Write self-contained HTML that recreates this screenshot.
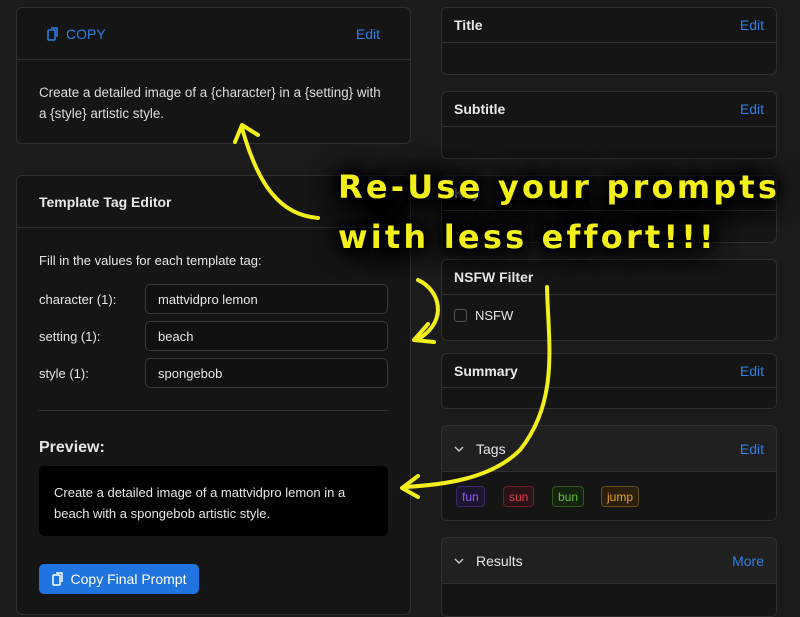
<!DOCTYPE html>
<html><head><style>
*{box-sizing:border-box;margin:0;padding:0}
body{width:800px;height:600px;overflow:hidden;background:#1b1b1b;font-family:"Liberation Sans",sans-serif;color:#e6e6e6;position:relative}
.card{position:absolute;background:#151515;border:1px solid #2f2f2f;border-radius:6px;overflow:hidden}
.hd{border-bottom:1px solid #2f2f2f;display:flex;align-items:center;justify-content:space-between;padding:0 12px;font-weight:bold;font-size:14px;color:#e8e8e8}
.blue{color:#2f7fe6;font-weight:normal;font-size:14px}
.inp{position:absolute;left:145px;width:243px;height:30px;border:1px solid #3a3a3a;border-radius:5px;background:#111;padding:7px 12px;font-size:13px}
.lbl{position:absolute;left:39px;font-size:13px}
.tag{position:absolute;top:486px;height:21px;border-radius:4px;font-size:12px;padding:3px 5px}
.ann{position:absolute;font-family:"DejaVu Sans",sans-serif;font-weight:bold;color:#f2ef1a;font-size:32px;letter-spacing:3.2px;text-shadow:0 0 8px #000,0 0 14px #000,0 0 20px #000,0 0 26px #000,0 0 30px #000}
</style></head><body>
<div class="card" style="left:16px;top:7px;width:395px;height:137px">
 <div class="hd" style="height:52px;padding:0 30px"><span class="blue" style="display:flex;align-items:center;gap:7px"><svg width="12" height="14" viewBox="0 0 12 14"><rect x="1" y="3" width="7" height="10" rx="1" fill="none" stroke="#2f7fe6" stroke-width="1.5"/><path d="M4 1h6v9" fill="none" stroke="#2f7fe6" stroke-width="1.5"/></svg>COPY</span><span class="blue">Edit</span></div>
 <div style="padding:22px 22px;font-size:13.4px;line-height:21px;color:#ddd">Create a detailed image of a {character} in a {setting} with a {style} artistic style.</div>
</div>
<div class="card" style="left:16px;top:175px;width:395px;height:440px">
 <div class="hd" style="height:52px;padding:0 22px">Template Tag Editor</div>
</div>
<div class="lbl" style="top:253px">Fill in the values for each template tag:</div>
<div class="lbl" style="top:292px">character (1):</div><div class="inp" style="top:284px">mattvidpro lemon</div>
<div class="lbl" style="top:329px">setting (1):</div><div class="inp" style="top:321px">beach</div>
<div class="lbl" style="top:366px">style (1):</div><div class="inp" style="top:358px">spongebob</div>
<div style="position:absolute;left:39px;top:410px;width:349px;border-top:1px solid #333"></div>
<div style="position:absolute;left:39px;top:439px;font-weight:bold;font-size:16px">Preview:</div>
<div style="position:absolute;left:39px;top:466px;width:349px;height:70px;background:#000;border-radius:5px;padding:16px 15px;font-size:13px;line-height:21px">Create a detailed image of a mattvidpro lemon in a beach with a spongebob artistic style.</div>
<div style="position:absolute;left:39px;top:564px;width:160px;height:30px;background:#1f74e0;border-radius:5px;font-size:14px;color:#fff;display:flex;align-items:center;justify-content:center;gap:7px"><svg width="12" height="14" viewBox="0 0 12 14"><rect x="1" y="3" width="7" height="10" rx="1" fill="none" stroke="#fff" stroke-width="1.5"/><path d="M4 1h6v9" fill="none" stroke="#fff" stroke-width="1.5"/></svg>Copy Final Prompt</div>

<div class="card" style="left:441px;top:7px;width:336px;height:68px"><div class="hd" style="height:35px">Title<span class="blue">Edit</span></div></div>
<div class="card" style="left:441px;top:91px;width:336px;height:68px"><div class="hd" style="height:35px">Subtitle<span class="blue">Edit</span></div></div>
<div class="card" style="left:441px;top:175px;width:336px;height:68px"><div class="hd" style="height:35px">Key</div></div>
<div class="card" style="left:441px;top:259px;width:336px;height:82px"><div class="hd" style="height:35px">NSFW Filter</div>
 <div style="padding:13px 12px;font-size:13px;display:flex;align-items:center;gap:8px"><span style="width:13px;height:13px;border:1px solid #555;border-radius:3px"></span>NSFW</div></div>
<div class="card" style="left:441px;top:353px;width:336px;height:56px"><div class="hd" style="height:34px">Summary<span class="blue">Edit</span></div></div>
<div class="card" style="left:441px;top:425px;width:336px;height:96px"><div class="hd" style="height:46px;background:#202020;font-weight:normal"><span style="display:flex;align-items:center;gap:12px"><svg width="10" height="6" viewBox="0 0 10 6"><path d="M1 1l4 4 4-4" fill="none" stroke="#ccc" stroke-width="1.4"/></svg>Tags</span><span class="blue">Edit</span></div></div>
<div class="tag" style="left:456px;border:1px solid #3b2a6b;background:#1d1530;color:#8b5cf6">fun</div>
<div class="tag" style="left:503px;border:1px solid #6a2029;background:#2a1216;color:#e0404f">sun</div>
<div class="tag" style="left:552px;border:1px solid #2c5a1c;background:#13230d;color:#62c23a">bun</div>
<div class="tag" style="left:601px;border:1px solid #6a4c17;background:#2a1f0c;color:#e4a52c">jump</div>
<div class="card" style="left:441px;top:537px;width:336px;height:80px"><div class="hd" style="height:46px;background:#202020;font-weight:normal"><span style="display:flex;align-items:center;gap:12px"><svg width="10" height="6" viewBox="0 0 10 6"><path d="M1 1l4 4 4-4" fill="none" stroke="#ccc" stroke-width="1.4"/></svg>Results</span><span class="blue">More</span></div></div>

<svg style="position:absolute;left:0;top:0" width="800" height="600" fill="none" stroke="#f2ef1a" stroke-width="4" stroke-linecap="round" stroke-linejoin="round">
<path d="M318 218 C280 215 258 185 242 128"/><path d="M235 142 L242 125 L258 135"/>
<path d="M418 280 C440 290 448 320 420 338"/><path d="M428 324 L414 340 L434 342"/>
<path d="M547 287 C548 340 560 400 520 450 C490 480 440 485 405 487"/><path d="M418 476 L402 488 L418 497"/>
</svg>
<div class="ann" style="left:338px;top:168px">Re-Use your prompts</div>
<div class="ann" style="left:338px;top:218px">with less effort!!!</div>
</body></html>
